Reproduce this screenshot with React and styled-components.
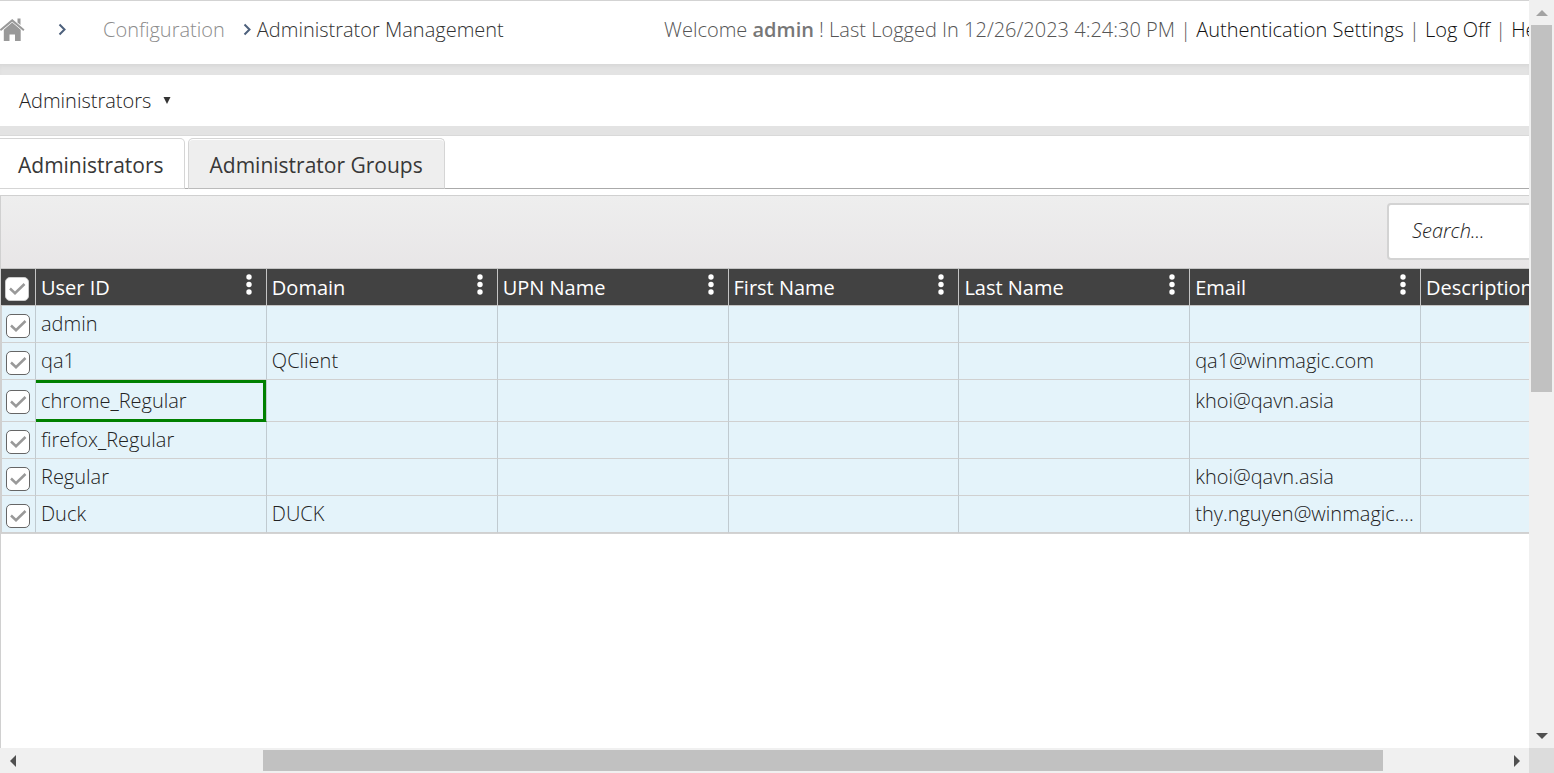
import React from "react";
import styled, { createGlobalStyle } from "styled-components";

const GlobalStyle = createGlobalStyle`
  *, *::before, *::after { box-sizing: border-box; }
  body {
    margin: 0;
    overflow: hidden;
    background: #fff;
    color: #222;
    font: 300 20px/26px "Open Sans", "Noto Sans", sans-serif;
  }
  button, input { font: inherit; color: inherit; }
`;

const Shell = styled.div`
  display: grid;
  grid-template: minmax(0, 1fr) 25px / minmax(0, 1fr) 25px;
  height: 100vh;
`;

const Page = styled.div`
  display: flex;
  flex-direction: column;
  overflow: hidden;
`;

const Header = styled.header`
  display: flex;
  align-items: center;
  justify-content: space-between;
  flex: none;
  height: 64px;
  padding-bottom: 5px;
  border-top: 1px solid #d3d3d3;
  white-space: nowrap;
`;

const Breadcrumbs = styled.nav`
  display: flex;
  align-items: center;
`;

const HomeLink = styled.a`
  display: flex;
  width: 25px;
  margin-right: 32px;
`;

const Crumb = styled.a`
  color: ${(p) => (p.$current ? "#333" : "#8c8c8c")};
  text-decoration: none;
  margin-left: ${(p) => (p.$current ? 5 : 36)}px;
  margin-right: ${(p) => (p.$current ? 0 : 17)}px;
`;

const Session = styled.div`
  color: #555;
  margin-right: -24px;
  white-space: pre;
  strong { font-weight: 600; color: #777; }
`;

const SessionLink = styled.a`
  color: #111;
  text-decoration: none;
`;

const Band = styled.div`
  flex: none;
  height: ${(p) => p.$height}px;
  background: #e3e3e3;
  border-bottom: ${(p) => (p.$line ? "1px solid #d9d9d9" : "none")};
  box-shadow: ${(p) => (p.$line ? "none" : "inset 0 4px 4px -2px #d6d6d6")};
`;

const MenuBar = styled.div`
  display: flex;
  align-items: center;
  flex: none;
  height: 51px;
  padding-left: 19px;
`;

const MenuButton = styled.button`
  display: flex;
  align-items: center;
  gap: 12px;
  padding: 0;
  border: 0;
  background: none;
`;

const Tabs = styled.div`
  display: flex;
  flex: none;
  gap: 3px;
  height: 53px;
  padding-top: 2px;
  border-bottom: 1px solid #aaa;
`;

const Tab = styled.button`
  height: 51px;
  padding: 2px ${(p) => (p.$active ? "20px 0 18px" : "21px 0")};
  border: 1px solid #d5d5d5;
  border-left-width: ${(p) => (p.$active ? 0 : 1)}px;
  border-bottom-color: ${(p) => (p.$active ? "#d5d5d5" : "#bbb")};
  border-radius: ${(p) => (p.$active ? "0 5px 0 0" : "5px 5px 0 0")};
  background: ${(p) => (p.$active ? "#fff" : "#eee")};
  box-shadow: inset 0 1px #fff;
  color: #383838;
  font-size: 21px;
  font-weight: 400;
`;

const Grid = styled.main`
  flex: 1;
  min-height: 0;
  margin-top: 6px;
  overflow: hidden;
  border-top: 1px solid #d0d0d0;
  border-left: 1px solid #d0d0d0;
`;

const Toolbar = styled.div`
  display: flex;
  justify-content: flex-end;
  align-items: flex-start;
  height: 73px;
  padding-top: 7px;
  border-bottom: 1px solid #c4c4c4;
  background: linear-gradient(#eee, #e8e6e7);
`;

const Search = styled.input`
  width: 342px;
  height: 57px;
  margin-right: -200px;
  padding: 0 23px 2px;
  border: 2px solid #d3d3d3;
  border-radius: 4px;
  background: #fff;
  font-style: italic;
  &::placeholder { color: #222; opacity: 1; }
`;

const Table = styled.table`
  table-layout: fixed;
  width: 1651px;
  border-collapse: separate;
  border-spacing: 0;
  border-bottom: 1px solid #d3d3d3;
  text-align: left;
`;

const Col = styled.col`
  width: ${(p) => (p.$check ? "35px" : "auto")};
`;

const HeadCell = styled.th`
  height: 37px;
  padding: ${(p) => (p.$check ? "0 0 0 4px" : "2px 14px 0 5px")};
  border: solid #c4c4c4;
  border-width: 0 1px 1px 0;
  background: #424242;
  color: #fff;
  font-weight: 400;
`;

const HeadContent = styled.div`
  display: flex;
  align-items: center;
  justify-content: space-between;
`;

const MoreButton = styled.button`
  display: flex;
  padding: 0;
  border: 0;
  background: none;
  height: 28px;
`;

const Row = styled.tr`
  height: ${(p) => (p.$focused ? 42 : 37)}px;
`;

const Cell = styled.td`
  padding: 0 0 0 5px;
  border: solid;
  border-width: 0 1px 1px 0;
  border-color: #d0d0d0 #c0cad0 ${(p) => (p.$focused ? "#008000" : "#d0d0d0")} #d0d0d0;
  background: #e4f3fa;
  white-space: nowrap;
  box-shadow: ${(p) =>
    p.$focused ? "inset 0 3px #008000, inset 0 -2px #008000, inset -3px 0 #008000" : "none"};
`;

const CheckCell = styled(Cell)`
  padding: 3px 0 0 4px;
  border-left: 1px solid #d0d0d0;
`;

const CheckBox = styled.label`
  display: grid;
  width: 24px;
  height: 24px;
  margin-top: ${(p) => (p.$head ? 4 : 0)}px;
  > * { grid-area: 1 / 1; }
  svg { pointer-events: none; }
  input {
    appearance: none;
    width: 24px;
    height: 24px;
    margin: 0;
    border: 1px solid ${(p) => (p.$head ? "#ccc" : "#666")};
    border-radius: 5px;
    background: #fff;
  }
  input:not(:checked) + svg { visibility: hidden; }
`;

const ScrollBar = styled.div`
  display: flex;
  flex-direction: ${(p) => (p.$vertical ? "column" : "row")};
  background: #f0f0f0;
`;

const ScrollArrow = styled.button`
  display: grid;
  place-items: center;
  flex: none;
  width: 25px;
  height: 25px;
  padding: 0;
  border: 0;
  background: none;
`;

const Track = styled.div`
  flex: ${(p) => p.$part} 1 0;
`;

const Thumb = styled(Track)`
  margin: ${(p) => (p.$vertical ? "0 2px" : "2px 0")};
  background: #c1c1c1;
`;

const Corner = styled.div`
  background: #dcdcdc;
`;

const HomeIcon = () => (
  <svg width="25" height="26" viewBox="0 0 25 26" fill="#999" aria-hidden="true">
    <path d="M17.500 1.500h3v6.500l-3-2.500z" />
    <path d="M12.200 2 24.500 12.500 23.300 14 12.200 4.700 1 14-.2 12.500z" />
    <path d="M12.200 5.600 20.700 12.800V24h-5.700v-6.500h-5.500v6.500H3.800V12.800z" />
  </svg>
);

const Chevron = () => (
  <svg width="10" height="14" viewBox="0 0 10 14" fill="none" stroke="#4d607c" strokeWidth="2" aria-hidden="true">
    <path d="M2.500 1.500 7.500 6.500 2.500 11.500" />
  </svg>
);

const CheckMark = () => (
  <svg width="24" height="24" viewBox="0 0 24 24" fill="none" stroke="#999" strokeWidth="2.500" aria-hidden="true">
    <path d="M5 11.500 10 16.200 19.500 7" />
  </svg>
);

const Dots = () => (
  <svg width="6" height="22" viewBox="0 0 6 22" fill="#fff" aria-hidden="true">
    <circle cx="3" cy="3" r="2.700" />
    <circle cx="3" cy="10.500" r="2.700" />
    <circle cx="3" cy="18" r="2.700" />
  </svg>
);

const arrows = {
  up: "M0 9 6 3l6 6z",
  down: "M0 3h12L6 9z",
  left: "M9 0v12L3 6z",
  right: "M3 0l6 6-6 6z",
};

const Arrow = ({ dir, color = "#505050" }) => (
  <svg width="12" height="12" viewBox="0 0 12 12" fill={color} aria-hidden="true">
    <path d={arrows[dir]} />
  </svg>
);

const Check = ({ label, head }) => (
  <CheckBox $head={head}>
    <input type="checkbox" defaultChecked aria-label={label} />
    <CheckMark />
  </CheckBox>
);

const columns = ["User ID", "Domain", "UPN Name", "First Name", "Last Name", "Email", "Description"];

const users = [
  { id: "admin" },
  { id: "qa1", domain: "QClient", email: "qa1@winmagic.com" },
  { id: "chrome_Regular", email: "khoi@qavn.asia", focused: true },
  { id: "firefox_Regular" },
  { id: "Regular", email: "khoi@qavn.asia" },
  { id: "Duck", domain: "DUCK", email: "thy.nguyen@winmagic...." },
];

export default function App() {
  return (
    <Shell>
      <GlobalStyle />
      <Page>
        <Header>
          <Breadcrumbs aria-label="Breadcrumb">
            <HomeLink href="#home" aria-label="Home"><HomeIcon /></HomeLink>
            <Chevron />
            <Crumb href="#configuration">Configuration</Crumb>
            <Chevron />
            <Crumb href="#management" $current>Administrator Management</Crumb>
          </Breadcrumbs>
          <Session>
            Welcome <strong>admin</strong> ! Last Logged In 12/26/2023 4:24:30 PM |{" "}
            <SessionLink href="#auth">Authentication Settings</SessionLink> |{" "}
            <SessionLink href="#logoff">Log Off</SessionLink> |{" "}
            <SessionLink href="#help">Help</SessionLink>
          </Session>
        </Header>
        <Band $height={11} />
        <MenuBar>
          <MenuButton type="button">
            Administrators
            <svg width="8" height="7" viewBox="0 0 8 7" fill="#333" aria-hidden="true">
              <path d="M.5 0h7L4 7z" />
            </svg>
          </MenuButton>
        </MenuBar>
        <Band $height={10} $line />
        <Tabs role="tablist">
          <Tab type="button" role="tab" aria-selected="true" $active>Administrators</Tab>
          <Tab type="button" role="tab" aria-selected="false">Administrator Groups</Tab>
        </Tabs>
        <Grid>
          <Toolbar>
            <Search type="text" placeholder="Search..." aria-label="Search" />
          </Toolbar>
          <Table>
            <colgroup>
              <Col $check />
              {columns.map((c) => <Col key={c} />)}
            </colgroup>
            <thead>
              <tr>
                <HeadCell $check><Check head label="Select all" /></HeadCell>
                {columns.map((c) => (
                  <HeadCell key={c} scope="col">
                    <HeadContent>
                      {c}
                      <MoreButton type="button" aria-label={`${c} options`}><Dots /></MoreButton>
                    </HeadContent>
                  </HeadCell>
                ))}
              </tr>
            </thead>
            <tbody>
              {users.map((u) => (
                <Row key={u.id} $focused={u.focused}>
                  <CheckCell><Check label={`Select ${u.id}`} /></CheckCell>
                  <Cell $focused={u.focused}>{u.id}</Cell>
                  <Cell>{u.domain}</Cell>
                  <Cell />
                  <Cell />
                  <Cell />
                  <Cell>{u.email}</Cell>
                  <Cell />
                </Row>
              ))}
            </tbody>
          </Table>
        </Grid>
      </Page>
      <ScrollBar $vertical>
        <ScrollArrow type="button" aria-label="Scroll up"><Arrow dir="up" color="#a3a3a3" /></ScrollArrow>
        <Thumb $part={367} $vertical />
        <Track $part={331} />
        <ScrollArrow type="button" aria-label="Scroll down"><Arrow dir="down" /></ScrollArrow>
      </ScrollBar>
      <ScrollBar>
        <ScrollArrow type="button" aria-label="Scroll left"><Arrow dir="left" /></ScrollArrow>
        <Track $part={238} />
        <Thumb $part={1120} />
        <Track $part={121} />
        <ScrollArrow type="button" aria-label="Scroll right"><Arrow dir="right" /></ScrollArrow>
      </ScrollBar>
      <Corner />
    </Shell>
  );
}
